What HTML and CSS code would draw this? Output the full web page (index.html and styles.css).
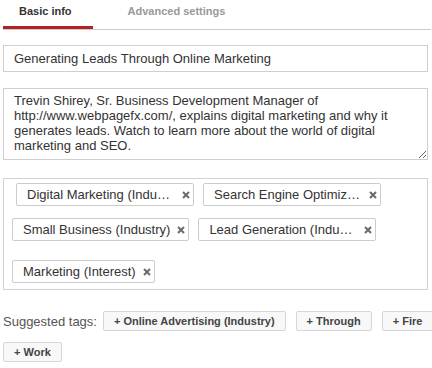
FILE: index.html
```html
<!DOCTYPE html>
<html lang="en">

<head>
    <meta charset="UTF-8">
    <title>Video details</title>
    <link rel="stylesheet" href="styles.css">
</head>

<body>
    <div class="page">
        <!-- Tabs -->
        <div class="tabs">
            <div class="tab active">Basic info</div>
            <div class="tab">Advanced settings</div>
        </div>

        <input class="field title" type="text" value="Generating Leads Through Online Marketing">

        <textarea class="field description">Trevin Shirey, Sr. Business Development Manager of http://www.webpagefx.com/, explains digital marketing and why it generates leads. Watch to learn more about the world of digital marketing and SEO.</textarea>

        <!-- Tags -->
        <div class="tags">
            <div class="tag-row first">
                <span class="chip"><span class="chip-text">Digital Marketing (Industry)</span><svg class="chip-x" viewBox="0 0 8 8"><path d="M1 1L7 7M7 1L1 7"/></svg></span>
                <span class="chip"><span class="chip-text">Search Engine Optimization (Industry)</span><svg class="chip-x" viewBox="0 0 8 8"><path d="M1 1L7 7M7 1L1 7"/></svg></span>
            </div>
            <div class="tag-row">
                <span class="chip"><span class="chip-text">Small Business (Industry)</span><svg class="chip-x" viewBox="0 0 8 8"><path d="M1 1L7 7M7 1L1 7"/></svg></span>
                <span class="chip"><span class="chip-text">Lead Generation (Industry)</span><svg class="chip-x" viewBox="0 0 8 8"><path d="M1 1L7 7M7 1L1 7"/></svg></span>
            </div>
            <div class="tag-row last">
                <span class="chip"><span class="chip-text">Marketing (Interest)</span><svg class="chip-x" viewBox="0 0 8 8"><path d="M1 1L7 7M7 1L1 7"/></svg></span>
            </div>
        </div>

        <!-- Suggested tags -->
        <div class="suggested">
            <span class="suggested-label">Suggested tags:</span>
            <button class="suggest-btn">+ Online Advertising (Industry)</button>
            <button class="suggest-btn">+ Through</button>
            <button class="suggest-btn">+ Fire</button>
            <button class="suggest-btn">+ Work</button>
        </div>
    </div>
</body>

</html>
```

FILE: styles.css
```css
body {
    margin: 0;
    padding: 0;
    background-color: #fff;
    font-family: "Liberation Sans", Arial, sans-serif;
    color: #333;
}

.page {
    width: 428px;
    padding-left: 3px;
}

/* Tabs */
.tabs {
    display: flex;
    border-bottom: 1px solid #ccc;
}
.tab {
    padding: 5px 21px 8px 16px;
    line-height: 13px;
    font-size: 11px;
    font-weight: bold;
    color: #999;
    border-bottom: 3px solid transparent;
}
.tab.active {
    color: #333;
    border-bottom-color: #b62025;
}
.tab + .tab {
    padding-left: 35px;
}

/* Inputs */
.field {
    display: block;
    box-sizing: border-box;
    width: 425px;
    margin: 0;
    border: 1px solid #cfcfcf;
    font-family: "Liberation Sans", Arial, sans-serif;
    font-size: 13px;
    color: #333;
    outline: none;
}
.title {
    margin-top: 15px;
    height: 27px;
    padding: 0 10px;
}
.description {
    margin-top: 16px;
    height: 72px;
    padding: 4px 10px;
    line-height: 15px;
    resize: vertical;
    overflow: hidden;
}

/* Tags box */
.tags {
    width: 425px;
    box-sizing: border-box;
    margin-top: 18px;
    border: 1px solid #d2d2d2;
    padding: 4px 0 6px;
}
.tag-row {
    display: flex;
    gap: 9px;
    padding-left: 8px;
    margin-top: 12px;
}
.tag-row.first {
    margin-top: 0;
    padding-left: 12px;
}
.tag-row.last {
    margin-top: 19px;
}
.chip {
    display: inline-flex;
    align-items: center;
    height: 23px;
    box-sizing: border-box;
    padding: 0 3px 0 10px;
    border: 1px solid #ccc;
    border-radius: 2px;
    font-size: 13px;
    line-height: 21px;
    color: #333;
}
.chip-text {
    max-width: 148px;
    white-space: nowrap;
    overflow: hidden;
    text-overflow: ellipsis;
}
.chip-x {
    width: 8px;
    height: 8px;
    margin-left: 7px;
    stroke: #6a6a6a;
    stroke-width: 2;
}

/* Suggested tags */
.suggested {
    display: flex;
    flex-wrap: wrap;
    align-items: center;
    column-gap: 10px;
    row-gap: 11px;
    margin-top: 21px;
    margin-right: -4px;
}
.suggested-label {
    font-size: 13px;
    color: #555;
    margin-right: -4px;
}
.suggest-btn {
    height: 20px;
    padding: 0 10px;
    margin: 0;
    border: 1px solid #d6d6d6;
    border-radius: 2px;
    background-color: #f8f8f8;
    font-family: "Liberation Sans", Arial, sans-serif;
    font-size: 11px;
    font-weight: bold;
    line-height: 18px;
    color: #444;
}
```
